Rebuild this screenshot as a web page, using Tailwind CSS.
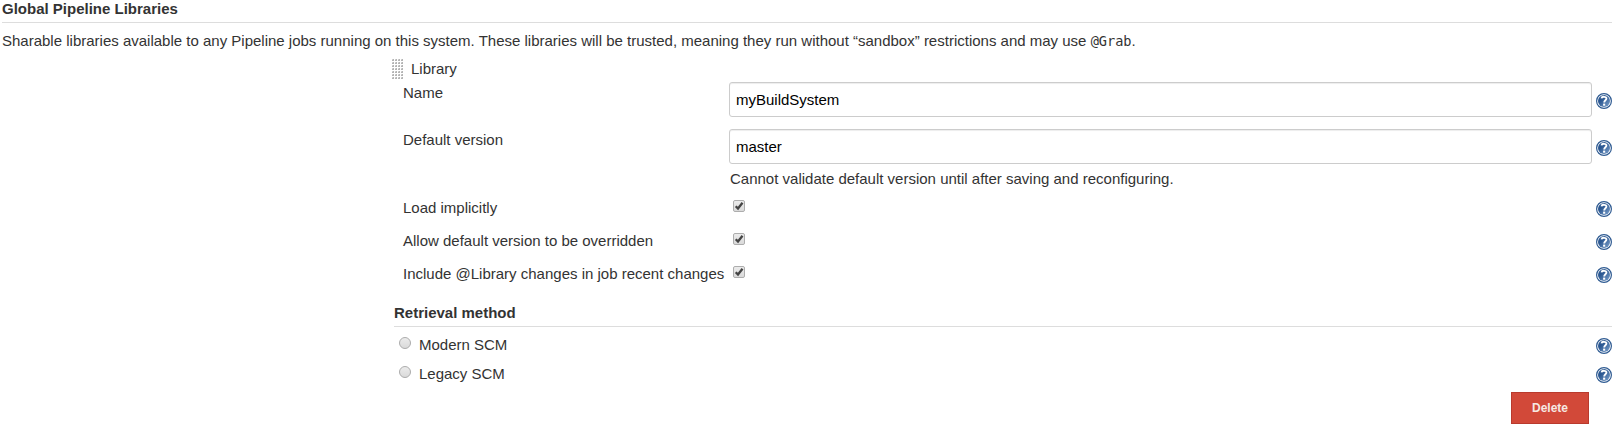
<!DOCTYPE html>
<html lang="en">
<head>
<meta charset="utf-8">
<title>Global Pipeline Libraries</title>
<script src="https://cdn.jsdelivr.net/npm/@tailwindcss/browser@4"></script>
</head>
<body class="h-[435px] overflow-hidden bg-white pr-3 pl-0.5 font-['Liberation_Sans',Arial,sans-serif] text-[15px] leading-[17px] text-[#333]">
<svg class="absolute size-0">
  <defs>
    <linearGradient id="ball" x1="0" y1="0" x2="1" y2="1"><stop offset="0.35" stop-color="#2b5791"/><stop offset="1" stop-color="#7fa3cd"/></linearGradient>
    <linearGradient id="face" x1="0" y1="0" x2="0" y2="1"><stop offset="0" stop-color="#ececec"/><stop offset="1" stop-color="#d9d9d9"/></linearGradient>
    <pattern id="dots" width="3" height="3" patternUnits="userSpaceOnUse"><rect width="2" height="2" fill="#d0d0d0"/><rect x="1" width="1" height="1" fill="#b4b4b4"/><rect y="1" width="2" height="1" fill="#b4b4b4"/></pattern>
    <symbol id="help" viewBox="0 0 16 16">
      <circle cx="8" cy="8" r="7.4" fill="#fff" stroke="#2f5b92" stroke-width="1.2"/>
      <circle cx="8" cy="8" r="6" fill="url(#ball)"/>
      <path d="M5.5 5.3C5.8 3.3 10.6 3.2 10.4 5.8C10.3 7.4 8.2 7.3 8.2 9.6" fill="none" stroke="#fff" stroke-width="1.9"/>
      <rect x="7.1" y="10.6" width="2.1" height="2.1" fill="#fff"/>
    </symbol>
    <symbol id="check" viewBox="0 0 12 12">
      <rect x="0.5" y="0.5" width="11" height="11" rx="1.5" fill="url(#face)" stroke="#adadad"/>
      <path d="M2.7 6.2L5 8.5L9.5 2.8" fill="none" stroke="#444" stroke-width="2.3"/>
    </symbol>
    <symbol id="radio" viewBox="0 0 12 12"><circle cx="6" cy="6" r="5.5" fill="url(#face)" stroke="#acacac"/></symbol>
  </defs>
</svg>
<h1 class="h-[23px] border-b border-[#ddd] font-bold">Global Pipeline Libraries</h1>
<p class="mt-[9px] h-[17px] whitespace-nowrap">Sharable libraries available to any Pipeline jobs running on this system. These libraries will be trusted, meaning they run without “sandbox” restrictions and may use <code class="font-['DejaVu_Sans_Mono',monospace] text-[13.6px] leading-none">@Grab</code>.</p>
<main class="mt-2.5 ml-[390px]">
  <div class="flex h-[23px] items-start">
    <svg class="h-5 w-[11px]"><rect width="11" height="20" fill="url(#dots)"/></svg>
    <span class="ml-2 pt-px">Library</span>
  </div>
  <div class="flex h-[47px] items-start">
    <label class="w-[337px] pt-0.5 pl-[11px]">Name</label>
    <input class="h-[35px] w-[863px] rounded-[3px] border border-[#ccc] px-1.5 text-black shadow-[inset_0_1px_1px_rgba(0,0,0,0.075)]" value="myBuildSystem">
    <svg class="mt-[11px] ml-1 size-4"><use href="#help"/></svg>
  </div>
  <div class="flex h-[41px] items-start">
    <label class="w-[337px] pt-0.5 pl-[11px]">Default version</label>
    <input class="h-[35px] w-[863px] rounded-[3px] border border-[#ccc] px-1.5 text-black shadow-[inset_0_1px_1px_rgba(0,0,0,0.075)]" value="master">
    <svg class="mt-[11px] ml-1 size-4"><use href="#help"/></svg>
  </div>
  <div class="h-[29px] pl-[338px]">Cannot validate default version until after saving and reconfiguring.</div>
  <div class="flex h-[33px] items-start">
    <span class="w-[341px] pl-[11px] whitespace-nowrap">Load implicitly</span>
    <svg class="mt-px size-3"><use href="#check"/></svg>
    <svg class="mt-0.5 ml-auto size-4"><use href="#help"/></svg>
  </div>
  <div class="flex h-[33px] items-start">
    <span class="w-[341px] pl-[11px] whitespace-nowrap">Allow default version to be overridden</span>
    <svg class="mt-px size-3"><use href="#check"/></svg>
    <svg class="mt-0.5 ml-auto size-4"><use href="#help"/></svg>
  </div>
  <div class="flex h-[39px] items-start">
    <span class="w-[341px] pl-[11px] whitespace-nowrap">Include @Library changes in job recent changes</span>
    <svg class="mt-px size-3"><use href="#check"/></svg>
    <svg class="mt-0.5 ml-auto size-4"><use href="#help"/></svg>
  </div>
  <h2 class="ml-0.5 h-[23px] border-b border-[#ddd] font-bold">Retrieval method</h2>
  <div class="mt-[9px] flex h-[29px] items-start pl-[7px]">
    <svg class="mt-px size-3"><use href="#radio"/></svg>
    <span class="ml-2">Modern SCM</span>
    <svg class="mt-0.5 ml-auto size-4"><use href="#help"/></svg>
  </div>
  <div class="flex h-[27px] items-start pl-[7px]">
    <svg class="mt-px size-3"><use href="#radio"/></svg>
    <span class="ml-2">Legacy SCM</span>
    <svg class="mt-0.5 ml-auto size-4"><use href="#help"/></svg>
  </div>
  <div class="flex justify-end pr-[23px]">
    <button class="h-8 w-[78px] border border-[#b93a2d] bg-[#d24939] pt-px text-[12px] font-bold text-[#f6e8e2]">Delete</button>
  </div>
</main>
</body>
</html>
